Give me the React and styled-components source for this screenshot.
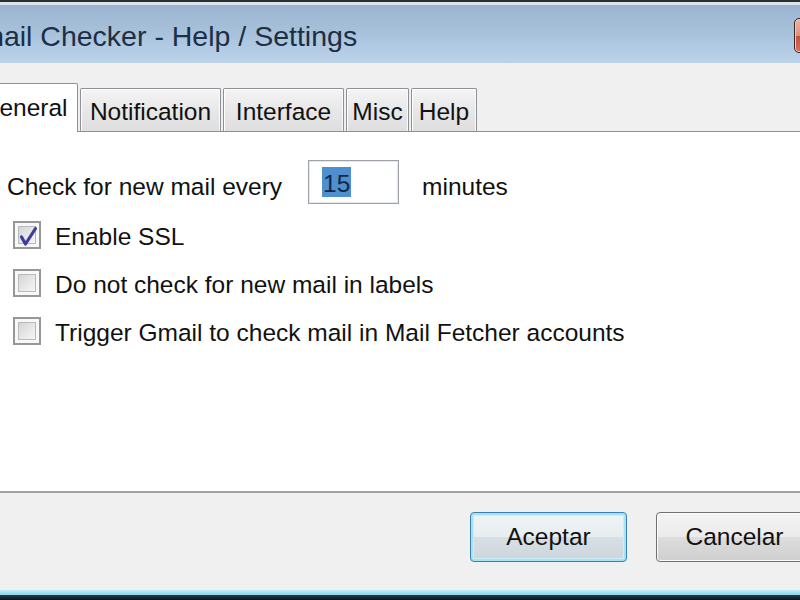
import React from 'react';
import styled, { createGlobalStyle } from 'styled-components';

const Global = createGlobalStyle`
  html, body { margin: 0; padding: 0; width: 800px; height: 600px; overflow: hidden; background: #f0f0f0; }
  #root { width: 800px; height: 600px; overflow: hidden; }
`;

const Window = styled.div`
  width: 900px;
  height: 600px;
  margin-left: -50px;
  box-sizing: border-box;
  display: flex;
  flex-direction: column;
  background: #f0f0f0;
  border-top: 2px solid #2b2f35;
  font-family: "Liberation Sans", Arial, sans-serif;
  color: #111;
`;

const TitleBar = styled.div`
  height: 61px;
  flex: none;
  box-sizing: border-box;
  border-top: 3px solid #dce5ee;
  background: linear-gradient(to bottom, #9ab4cf 0%, #a9c2dc 50%, #bcd3ea 100%);
  display: flex;
  align-items: flex-start;
  justify-content: space-between;
  padding: 0 6px 0 8px;
`;

const Title = styled.div`
  font-size: 28.5px;
  line-height: 34px;
  margin-top: 14px;
  color: #1b2f45;
  white-space: nowrap;
`;

const CloseButton = styled.div`
  width: 50px;
  height: 35px;
  flex: none;
  margin-top: 13px;
  box-sizing: border-box;
  border: 1px solid #3d2424;
  border-radius: 5px;
  background: linear-gradient(to bottom, #ebb6a8 0%, #dc9080 50%, #c5503f 51%, #d3705f 100%);
  box-shadow: inset 0 0 0 1px #f2c8bd;
`;

const Body = styled.div`
  flex: 1;
  display: flex;
  flex-direction: column;
  padding-top: 20px;
`;

const TabStrip = styled.div`
  height: 48px;
  flex: none;
  display: flex;
  align-items: flex-end;
  gap: 2px;
  padding-left: 20px;
  position: relative;
  z-index: 1;
`;

const Tab = styled.div`
  width: ${p => p.$w}px;
  height: ${p => (p.$active ? 49 : 43)}px;
  margin-bottom: ${p => (p.$active ? -1 : 0)}px;
  box-sizing: border-box;
  border: 1px solid #8d9096;
  border-bottom: none;
  border-radius: 2px 2px 0 0;
  background: ${p =>
    p.$active
      ? '#ffffff'
      : 'linear-gradient(to bottom, #f4f4f4 0%, #e9e9e9 45%, #dedede 100%)'};
  box-shadow: ${p => (p.$active ? 'none' : 'inset 1px 1px 0 #ffffff, inset -1px 0 0 #fafafa')};
  display: flex;
  align-items: center;
  justify-content: center;
  padding-top: ${p => (p.$active ? 0 : 3)}px;
  font-size: 24.5px;
  line-height: 30px;
  color: #111;
  white-space: nowrap;
`;

const Panel = styled.div`
  height: 362px;
  flex: none;
  box-sizing: border-box;
  background: #ffffff;
  border-top: 1px solid #8d9096;
  border-bottom: 2px solid #a2a2a2;
  padding: 28px 0 0 57px;
`;

const IntervalRow = styled.div`
  display: flex;
  align-items: flex-start;
`;

const Text = styled.span`
  font-size: 24.5px;
  line-height: 30px;
  color: #111;
  white-space: nowrap;
  margin-top: ${p => p.$top || 0}px;
  margin-left: ${p => p.$left || 0}px;
`;

const NumberBox = styled.div`
  width: 91px;
  height: 44px;
  box-sizing: border-box;
  margin-left: 26px;
  border: 1px solid #9ea3a9;
  box-shadow: inset 0 0 0 1px #e4e7ea;
  background: #fff;
  padding: 6px 0 0 13px;
`;

const Selected = styled.span`
  display: inline-block;
  height: 30px;
  box-sizing: border-box;
  padding: 4px 1px 0;
  line-height: 26px;
  font-size: 24.5px;
  background: #4f8fd0;
  color: #10294a;
`;

const CheckList = styled.div`
  margin-top: 7px;
  margin-left: 6px;
  display: flex;
  flex-direction: column;
`;

const CheckRow = styled.label`
  height: 48px;
  display: flex;
  align-items: center;
  gap: 14px;
`;

const Box = styled.span`
  width: 28px;
  height: 28px;
  flex: none;
  box-sizing: border-box;
  border: 2px solid #979797;
  background: #f8f8f8;
  padding: 3px;
  display: flex;
`;

const BoxInner = styled.span`
  flex: 1;
  border: 1px solid #b9b9b9;
  background: linear-gradient(135deg, #d4d4d4 0%, #e8e8e8 55%, #f6f6f6 100%);
  position: relative;
`;

const Mark = styled.svg`
  position: absolute;
  left: -5px;
  top: -5px;
  width: 28px;
  height: 28px;
  overflow: visible;
`;

const CheckLabel = styled.span`
  font-size: 24.5px;
  line-height: 30px;
  padding-top: 3px;
  color: #111;
  white-space: nowrap;
`;

const Footer = styled.div`
  flex: 1;
  display: flex;
  justify-content: flex-end;
  align-items: flex-start;
  gap: 29px;
  padding: 19px 37px 0 0;
`;

const Button = styled.div`
  width: 157px;
  height: 50px;
  box-sizing: border-box;
  border-radius: 4px;
  border: 1px solid ${p => (p.$focused ? '#3c7fb1' : '#707070')};
  background: ${p =>
    p.$focused
      ? 'linear-gradient(to bottom, #f0f4f6 0%, #e7edf0 50%, #d7dfe3 51%, #ccd6db 100%)'
      : 'linear-gradient(to bottom, #f3f3f3 0%, #ebebeb 50%, #dddddd 51%, #cfcfcf 100%)'};
  box-shadow: ${p =>
    p.$focused
      ? 'inset 0 0 0 2px #a6e2f6, inset 0 0 0 3px #cdeef9'
      : 'inset 0 0 0 1px #fbfbfb'};
  display: flex;
  align-items: center;
  justify-content: center;
  font-size: 24.5px;
  color: #111;
`;

const BottomFrame = styled.div`
  height: 10px;
  flex: none;
  background: linear-gradient(to bottom, #c2ecf8 0%, #8ad3ea 50%, #1f3d48 51%, #0b1216 100%);
`;

function Checkbox({ checked }) {
  return (
    <Box>
      <BoxInner>
        {checked && (
          <Mark viewBox="0 0 28 28">
            <path
              d="M7.5 15 L11.5 22 L21.5 6.5"
              fill="none"
              stroke="#3e3e98"
              strokeWidth="3.2"
              strokeLinecap="round"
              strokeLinejoin="round"
            />
          </Mark>
        )}
      </BoxInner>
    </Box>
  );
}

const tabs = [
  { label: 'General', w: 108, active: true },
  { label: 'Notification', w: 141 },
  { label: 'Interface', w: 121 },
  { label: 'Misc', w: 63 },
  { label: 'Help', w: 66 },
];

const options = [
  { label: 'Enable SSL', checked: true },
  { label: 'Do not check for new mail in labels', checked: false },
  { label: 'Trigger Gmail to check mail in Mail Fetcher accounts', checked: false },
];

export default function App() {
  return (
    <>
      <Global />
      <Window>
        <TitleBar>
          <Title>Gmail Checker - Help / Settings</Title>
          <CloseButton />
        </TitleBar>
        <Body>
          <TabStrip>
            {tabs.map(t => (
              <Tab key={t.label} $w={t.w} $active={t.active}>
                {t.label}
              </Tab>
            ))}
          </TabStrip>
          <Panel>
            <IntervalRow>
              <Text $top={12}>Check for new mail every</Text>
              <NumberBox>
                <Selected>15</Selected>
              </NumberBox>
              <Text $top={12} $left={23}>minutes</Text>
            </IntervalRow>
            <CheckList>
              {options.map(o => (
                <CheckRow key={o.label}>
                  <Checkbox checked={o.checked} />
                  <CheckLabel>{o.label}</CheckLabel>
                </CheckRow>
              ))}
            </CheckList>
          </Panel>
          <Footer>
            <Button $focused>Aceptar</Button>
            <Button>Cancelar</Button>
          </Footer>
        </Body>
        <BottomFrame />
      </Window>
    </>
  );
}
